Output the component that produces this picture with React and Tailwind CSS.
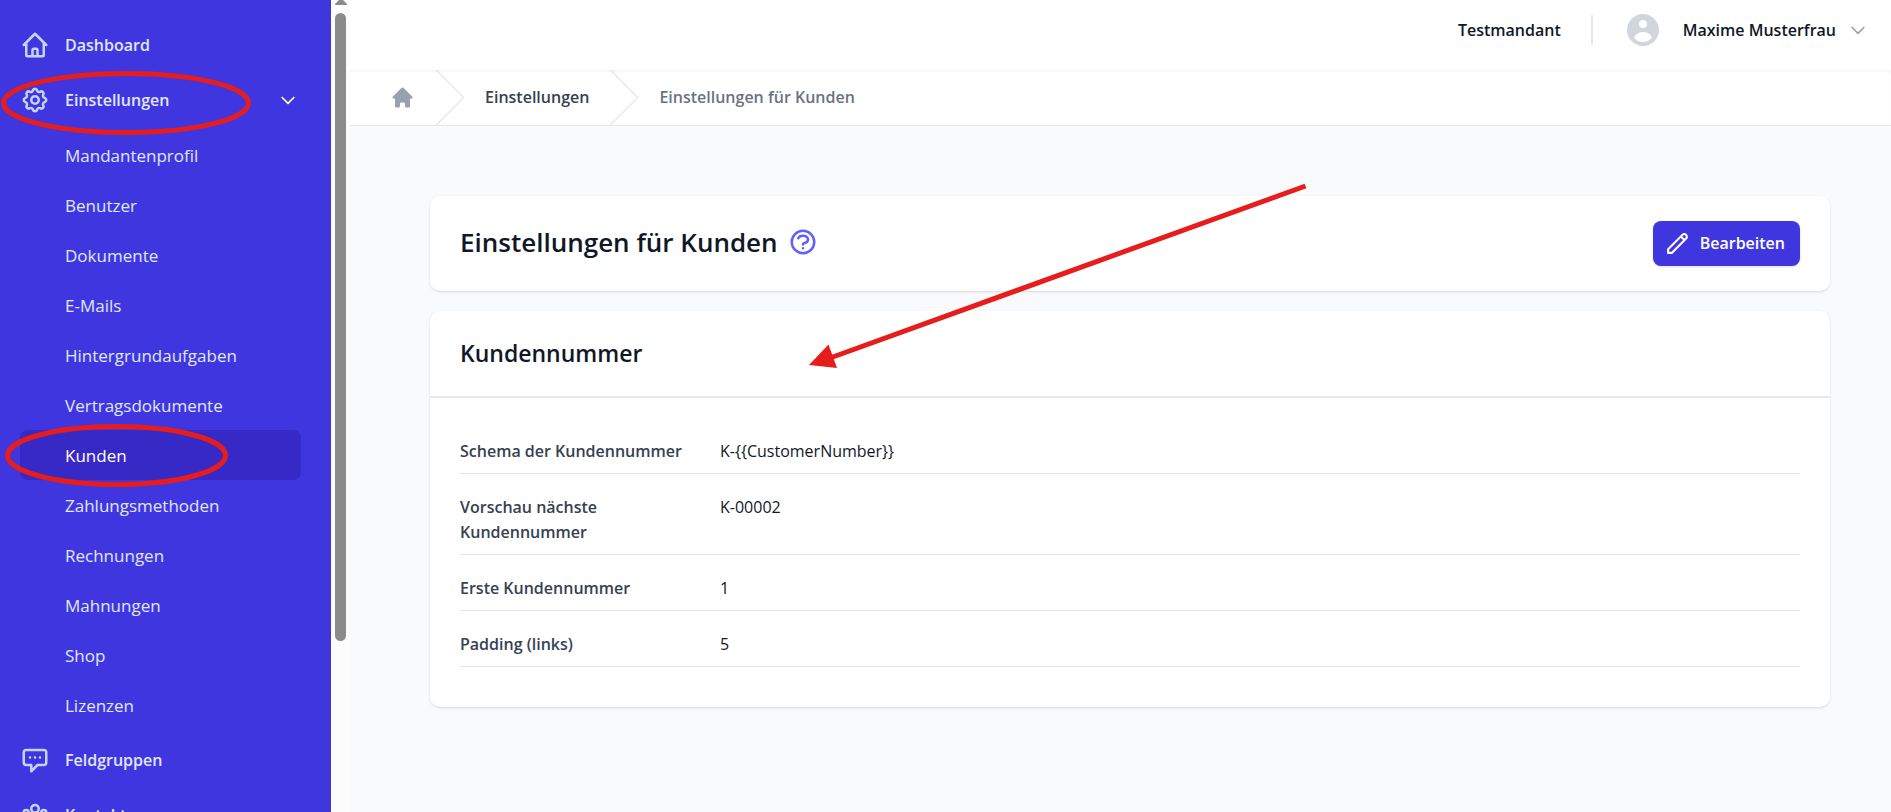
import {
  HiHome,
  HiOutlineChatAlt,
  HiOutlineChevronDown,
  HiOutlineCog,
  HiOutlineHome,
  HiOutlinePencil,
  HiOutlineQuestionMarkCircle,
  HiOutlineUserGroup,
  HiUserCircle,
} from 'react-icons/hi'

const settingsItems = [
  'Mandantenprofil',
  'Benutzer',
  'Dokumente',
  'E-Mails',
  'Hintergrundaufgaben',
  'Vertragsdokumente',
  'Kunden',
  'Zahlungsmethoden',
  'Rechnungen',
  'Mahnungen',
  'Shop',
  'Lizenzen',
]

const customerFields = [
  { label: 'Schema der Kundennummer', value: 'K-{{CustomerNumber}}' },
  { label: 'Vorschau nächste Kundennummer', value: 'K-00002' },
  { label: 'Erste Kundennummer', value: '1' },
  { label: 'Padding (links)', value: '5' },
]

function NavLink({ icon: Icon, label, expanded }) {
  return (
    <a href="#" className="flex h-[50px] shrink-0 items-center gap-[15px] rounded-lg pr-[3px] font-semibold text-indigo-100">
      <Icon className="size-[30px] shrink-0 text-indigo-200" />
      <span className="flex-1">{label}</span>
      {expanded && <HiOutlineChevronDown className="size-5 text-white" />}
    </a>
  )
}

function Sidebar() {
  return (
    <nav className="flex w-[331px] shrink-0 flex-col gap-[5px] overflow-hidden bg-[#4036e0] py-5 pl-5 pr-[30px]">
      <NavLink icon={HiOutlineHome} label="Dashboard" />
      <NavLink icon={HiOutlineCog} label="Einstellungen" expanded />
      <ul className="shrink-0 text-[17px]">
        {settingsItems.map((item) => (
          <li key={item}>
            <a
              href="#"
              className={`flex h-[50px] items-center rounded-lg pl-[45px] ${item === 'Kunden' ? 'bg-[#3629c6] text-white' : 'text-indigo-100'}`}
            >
              {item}
            </a>
          </li>
        ))}
      </ul>
      <NavLink icon={HiOutlineChatAlt} label="Feldgruppen" />
      <NavLink icon={HiOutlineUserGroup} label="Kontakte" />
    </nav>
  )
}

function ScrollTrack() {
  return (
    <div className="flex w-[19px] shrink-0 flex-col gap-2 bg-[#fcfcfc] pl-1" aria-hidden="true">
      <svg viewBox="0 0 12 5" className="h-[5px] w-3 text-[#8b8b8b]">
        <path d="M4 0h4l4 4c0 1-.5 1-1 1H1C.5 5 0 5 0 4z" fill="currentColor" />
      </svg>
      <div className="h-[628px] w-[11px] rounded-full bg-[#8b8b8b]" />
    </div>
  )
}

function Header() {
  return (
    <header className="flex h-[70px] items-center justify-end bg-white pb-[10px] pr-[23px] font-semibold text-gray-900">
      <span>Testmandant</span>
      <span className="mx-[30px] h-[30px] w-[2px] bg-gray-200" />
      <button type="button" className="flex items-center">
        <HiUserCircle className="size-10 text-gray-300" />
        <span className="ml-5">Maxime Musterfrau</span>
        <HiOutlineChevronDown className="ml-3 size-5 text-gray-400" />
      </button>
    </header>
  )
}

function CrumbSeparator() {
  return (
    <svg viewBox="0 0 24 44" preserveAspectRatio="none" fill="currentColor" className="h-[55px] w-[30px] shrink-0 text-gray-200" aria-hidden="true">
      <path d="M.293 0l22 22-22 22h1.414l22-22-22-22H.293z" />
    </svg>
  )
}

function Breadcrumb() {
  return (
    <nav
      aria-label="Breadcrumb"
      className="flex items-center gap-5 border-b border-gray-200 bg-white pl-10 font-semibold text-gray-500 shadow-[inset_0_2px_2px_rgba(0,0,0,0.04)]"
    >
      <a href="#" aria-label="Startseite">
        <HiHome className="size-[25px] text-gray-400" />
      </a>
      <CrumbSeparator />
      <a href="#" className="text-gray-700">Einstellungen</a>
      <CrumbSeparator />
      <a href="#">Einstellungen für Kunden</a>
    </nav>
  )
}

// red markings that lie over the page
function Annotations() {
  return (
    <>
      <svg className="pointer-events-none absolute left-0 top-0 h-[500px] w-[260px]" fill="none" stroke="#e71d1d" strokeWidth="5" aria-hidden="true">
        <ellipse cx="126" cy="103" rx="122.5" ry="29.5" />
        <ellipse cx="116.5" cy="455.5" rx="109" ry="29" />
      </svg>
      <svg viewBox="0 0 500 190" className="pointer-events-none absolute left-[808px] top-[180px] h-[190px] w-[500px]" aria-hidden="true">
        <path d="M497.5 6L22 178" stroke="#e71d1d" strokeWidth="5" />
        <path d="M1 185l19.5-20.5L29 188z" fill="#e71d1d" />
      </svg>
    </>
  )
}

export default function App() {
  return (
    <div className="relative flex h-screen overflow-hidden bg-[#f9fafc] font-['Open_Sans','Noto_Sans',sans-serif] text-base leading-[25px]">
      <Sidebar />
      <ScrollTrack />
      <div className="min-w-0 flex-1">
        <Header />
        <Breadcrumb />
        <main className="flex flex-col gap-5 pl-20 pr-[61px] pt-[70px]">
          <section className="flex items-start justify-between rounded-[10px] bg-white px-[30px] py-[25px] shadow">
            <div className="flex items-center gap-[10px]">
              <h1 className="text-[26px] font-semibold leading-[42px] text-gray-900">Einstellungen für Kunden</h1>
              <HiOutlineQuestionMarkCircle className="size-[30px] text-indigo-500" />
            </div>
            <button type="button" className="flex h-[45px] items-center gap-[10px] rounded-lg bg-[#4036e0] pl-3 pr-[15px] font-semibold text-white shadow-sm">
              <HiOutlinePencil className="size-[25px]" />
              Bearbeiten
            </button>
          </section>
          <section className="rounded-[10px] bg-white shadow">
            <h2 className="border-b-2 border-gray-200 px-[30px] py-[25px] text-[23px] font-semibold leading-[35px] text-gray-900">Kundennummer</h2>
            <dl className="px-[30px] pb-10 pt-5">
              {customerFields.map((field) => (
                <div key={field.label} className="flex border-b border-gray-200 pb-[9px] pt-[21px]">
                  <dt className="w-[260px] shrink-0 pr-8 font-semibold text-gray-700">{field.label}</dt>
                  <dd className="text-gray-900">{field.value}</dd>
                </div>
              ))}
            </dl>
          </section>
        </main>
      </div>
      <Annotations />
    </div>
  )
}
